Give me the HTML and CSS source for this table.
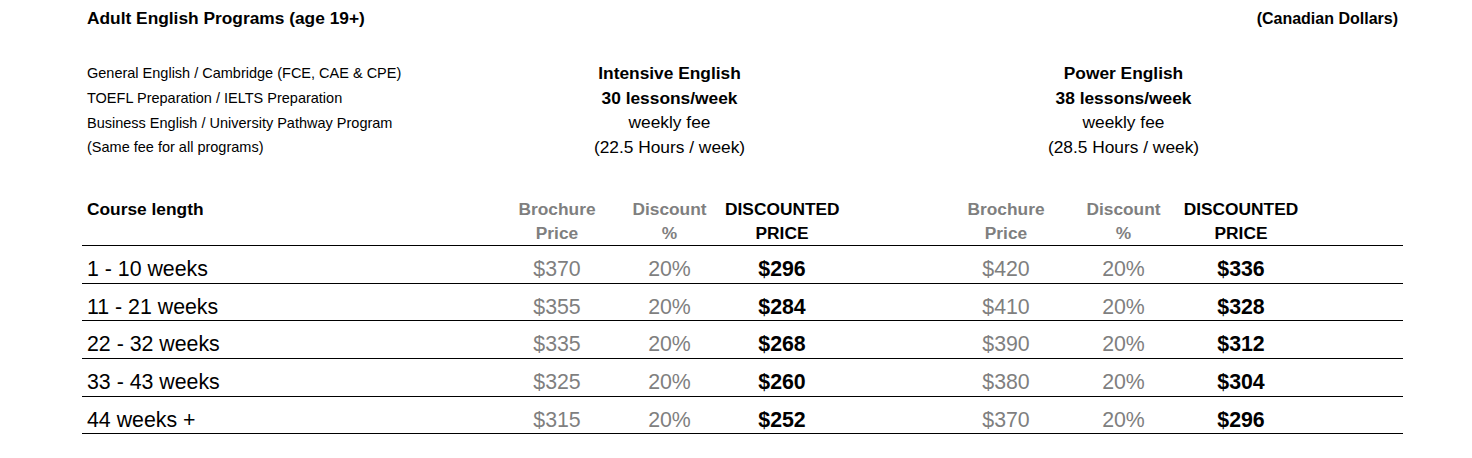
FILE: index.html
```html
<!DOCTYPE html>
<html lang="en">
<head>
<meta charset="utf-8">
<title>Adult English Programs</title>
<link rel="stylesheet" href="styles.css">
</head>
<body>
<div class="page">
  <div class="title-row">
    <div class="title">Adult English Programs (age 19+)</div>
    <div class="currency">(Canadian Dollars)</div>
  </div>

  <div class="intro">
    <div class="programs">
      <div>General English / Cambridge (FCE, CAE &amp; CPE)</div>
      <div>TOEFL Preparation / IELTS Preparation</div>
      <div>Business English / University Pathway Program</div>
      <div>(Same fee for all programs)</div>
    </div>
    <div class="plan plan-intensive">
      <div class="strong">Intensive English</div>
      <div class="strong">30 lessons/week</div>
      <div>weekly fee</div>
      <div>(22.5 Hours / week)</div>
    </div>
    <div class="plan plan-power">
      <div class="strong">Power English</div>
      <div class="strong">38 lessons/week</div>
      <div>weekly fee</div>
      <div>(28.5 Hours / week)</div>
    </div>
  </div>

  <table class="prices">
    <colgroup>
      <col class="c-len">
      <col class="c-bro">
      <col class="c-dis">
      <col class="c-net">
      <col class="c-gap">
      <col class="c-bro2">
      <col class="c-dis2">
      <col class="c-net2">
      <col class="c-end">
    </colgroup>
    <thead>
      <tr>
        <th class="len">Course length</th>
        <th class="muted">Brochure<br>Price</th>
        <th class="muted">Discount<br>%</th>
        <th>DISCOUNTED<br>PRICE</th>
        <th></th>
        <th class="muted">Brochure<br>Price</th>
        <th class="muted">Discount<br>%</th>
        <th>DISCOUNTED<br>PRICE</th>
        <th></th>
      </tr>
    </thead>
    <tbody>
      <tr>
        <td class="len">1 - 10 weeks</td>
        <td class="muted">$370</td><td class="muted">20%</td><td class="net">$296</td>
        <td></td>
        <td class="muted">$420</td><td class="muted">20%</td><td class="net">$336</td>
        <td></td>
      </tr>
      <tr>
        <td class="len">11 - 21 weeks</td>
        <td class="muted">$355</td><td class="muted">20%</td><td class="net">$284</td>
        <td></td>
        <td class="muted">$410</td><td class="muted">20%</td><td class="net">$328</td>
        <td></td>
      </tr>
      <tr>
        <td class="len">22 - 32 weeks</td>
        <td class="muted">$335</td><td class="muted">20%</td><td class="net">$268</td>
        <td></td>
        <td class="muted">$390</td><td class="muted">20%</td><td class="net">$312</td>
        <td></td>
      </tr>
      <tr>
        <td class="len">33 - 43 weeks</td>
        <td class="muted">$325</td><td class="muted">20%</td><td class="net">$260</td>
        <td></td>
        <td class="muted">$380</td><td class="muted">20%</td><td class="net">$304</td>
        <td></td>
      </tr>
      <tr>
        <td class="len">44 weeks +</td>
        <td class="muted">$315</td><td class="muted">20%</td><td class="net">$252</td>
        <td></td>
        <td class="muted">$370</td><td class="muted">20%</td><td class="net">$296</td>
        <td></td>
      </tr>
    </tbody>
  </table>
</div>
</body>
</html>
```

FILE: styles.css
```css
html, body {
  margin: 0;
  padding: 0;
  background: #ffffff;
}

body {
  font-family: "Liberation Sans", Arial, sans-serif;
  color: #000000;
}

.page {
  width: 1321px;
  margin-left: 82px;
  padding-top: 8px;
}

.title-row {
  display: flex;
  justify-content: space-between;
  align-items: baseline;
  padding: 0 5px;
  line-height: 20px;
}

.title {
  font-size: 17.33px;
  font-weight: bold;
}

.currency {
  font-size: 16px;
  font-weight: bold;
}

.intro {
  display: grid;
  grid-template-columns: 418px 114px 111px 114px 109px 116px 119px 116px 104px;
  margin-top: 32px;
}

.programs {
  grid-column: 1 / 2;
  padding-left: 5px;
  font-size: 14.5px;
  line-height: 24.8px;
  white-space: nowrap;
}

.plan {
  text-align: center;
  font-size: 17.33px;
  line-height: 24.5px;
  white-space: nowrap;
}

.plan-intensive {
  grid-column: 2 / 5;
}

.plan-power {
  grid-column: 6 / 9;
}

.strong {
  font-weight: bold;
}

.prices {
  margin-top: 38px;
  width: 1321px;
  table-layout: fixed;
  border-collapse: separate;
  border-spacing: 0;
}

.c-len { width: 418px; }
.c-bro { width: 114px; }
.c-dis { width: 111px; }
.c-net { width: 114px; }
.c-gap { width: 109px; }
.c-bro2 { width: 116px; }
.c-dis2 { width: 119px; }
.c-net2 { width: 116px; }
.c-end { width: 104px; }

.prices th {
  padding: 0;
  font-size: 17.33px;
  font-weight: bold;
  line-height: 23.5px;
  text-align: center;
  vertical-align: top;
  white-space: nowrap;
  border-bottom: 1px solid #000000;
}

.prices td {
  height: 37.6px;
  box-sizing: border-box;
  padding: 0 0 1.5px 0;
  font-size: 21.33px;
  line-height: 24px;
  text-align: center;
  vertical-align: bottom;
  white-space: nowrap;
  border-bottom: 1px solid #000000;
}

.prices .len {
  text-align: left;
  padding-left: 5px;
}

.prices .muted {
  color: #7f7f7f;
}

.prices .net {
  font-weight: bold;
}
```
